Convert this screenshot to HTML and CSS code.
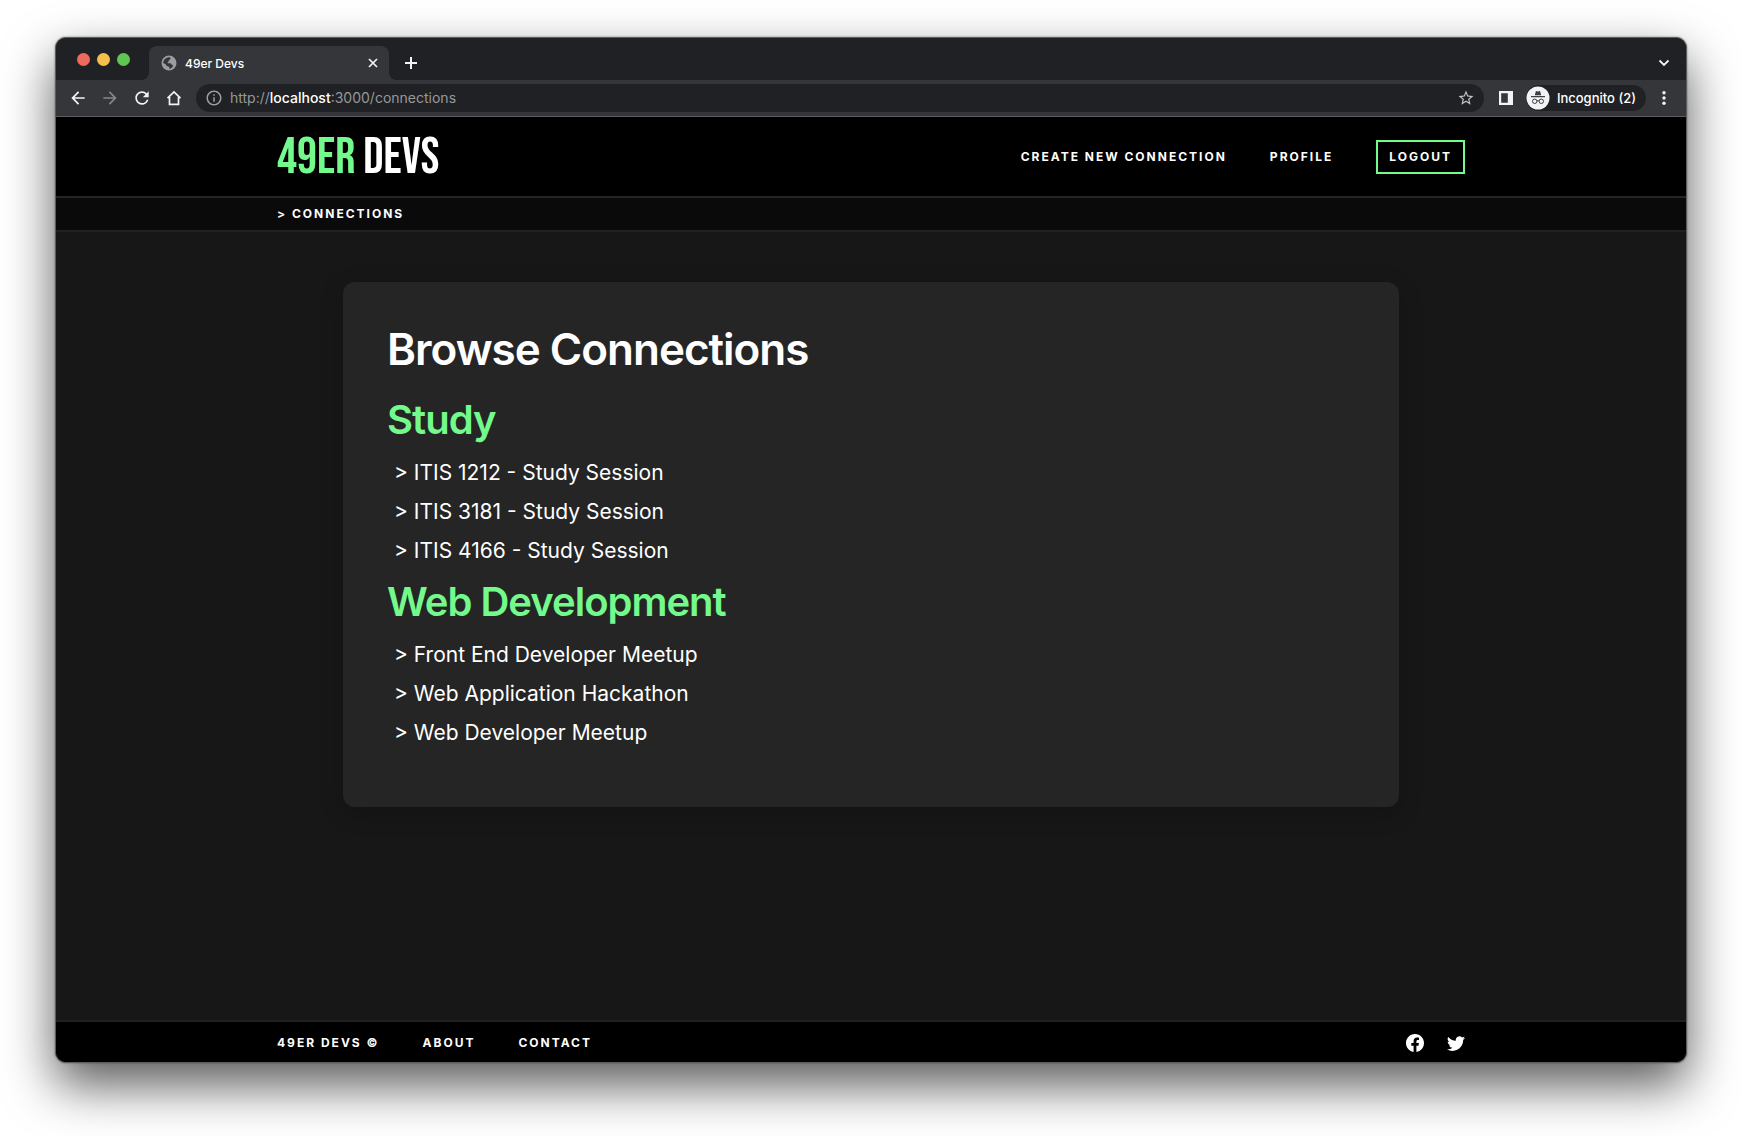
FILE: index.html
```html
<!DOCTYPE html>
<html lang="en">
<head>
<meta charset="utf-8">
<meta name="viewport" content="width=device-width, initial-scale=1">
<title>49er Devs</title>
<link rel="stylesheet" href="styles.css">
</head>
<body>
<div class="window">
  <div class="tabstrip">
    <div class="lights">
      <button class="light light-close" aria-label="Close window"></button>
      <button class="light light-min" aria-label="Minimize window"></button>
      <button class="light light-max" aria-label="Zoom window"></button>
    </div>
    <div class="tab">
      <svg class="globe" width="18" height="18" viewBox="0 0 24 24"><circle cx="12" cy="12" r="10" fill="#9a9da1"/><path fill="#35363a" d="M10.500 4.500c2.500-.800 4 .200 3.600 1.800-.300 1.400-1.900 1.300-2.400 2.200-.400.800.200 1.600-.700 2.100-.800.500-1.300 1.200-.500 1.700h3.300c1.300.200 1 1.600 2.200 1.900 1 .200 1.600.800 1.300 1.800-.600 1.800-2.500 3.500-4.600 3.900-.300-1.200.300-2-.700-2.800-1.600-1-3.200-.400-3.700-2.200-.500-1.600-1.700-2.200-4-2.700C4.200 8.500 7 5.200 10.500 4.500z"/></svg>
      <span class="tab-title">49er Devs</span>
      <button class="icon-btn" aria-label="Close tab"><svg width="16" height="16" viewBox="0 0 16 16" fill="none" stroke="currentColor" stroke-width="1.7"><path d="M4 4l8 8M12 4l-8 8"/></svg></button>
    </div>
    <button class="icon-btn new-tab" aria-label="New tab"><svg width="16" height="16" viewBox="0 0 16 16" fill="none" stroke="currentColor" stroke-width="2"><path d="M8 2v12M2 8h12"/></svg></button>
    <button class="icon-btn tab-search" aria-label="Search tabs"><svg width="16" height="16" viewBox="0 0 16 16" fill="none" stroke="currentColor" stroke-width="1.8"><path d="M3.500 5.500L8 10l4.500-4.500"/></svg></button>
  </div>

  <div class="toolbar">
    <div class="history">
      <button class="icon-btn" aria-label="Back"><svg width="20" height="20" viewBox="0 0 24 24" fill="currentColor"><path d="M20 11H7.830l5.590-5.590L12 4l-8 8 8 8 1.410-1.410L7.830 13H20v-2z"/></svg></button>
      <button class="icon-btn dim" aria-label="Forward"><svg width="20" height="20" viewBox="0 0 24 24" fill="currentColor"><path d="M4 13h12.170l-5.590 5.590L12 20l8-8-8-8-1.410 1.410L16.170 11H4z"/></svg></button>
      <button class="icon-btn" aria-label="Reload"><svg width="20" height="20" viewBox="0 0 24 24" fill="currentColor"><path d="M17.650 6.350A7.958 7.958 0 0 0 12 4c-4.420 0-7.990 3.580-7.990 8s3.570 8 7.990 8c3.730 0 6.840-2.550 7.730-6h-2.080A5.990 5.990 0 0 1 12 18c-3.310 0-6-2.690-6-6s2.690-6 6-6c1.660 0 3.140.690 4.220 1.780L13 11h7V4l-2.350 2.350z"/></svg></button>
      <button class="icon-btn" aria-label="Home"><svg width="20" height="20" viewBox="0 0 20 20" fill="none" stroke="currentColor" stroke-width="1.700"><path d="M3.500 10.200L10 4l6.500 6.200M5.500 9v7.300h9V9"/></svg></button>
    </div>
    <div class="omnibox">
      <svg width="18" height="18" viewBox="0 0 24 24" fill="#9a9da1"><path d="M11 7h2v2h-2zm0 4h2v6h-2zm1-9C6.480 2 2 6.480 2 12s4.480 10 10 10 10-4.480 10-10S17.520 2 12 2zm0 18c-4.410 0-8-3.590-8-8s3.590-8 8-8 8 3.590 8 8-3.590 8-8 8z"/></svg>
      <div class="address">
        <input class="address-input" type="text" aria-label="Address">
        <span class="address-text">http://<b>localhost</b>:3000/connections</span>
      </div>
      <button class="icon-btn star" aria-label="Bookmark this tab"><svg width="18" height="18" viewBox="0 0 24 24" fill="currentColor"><path d="M22 9.240l-7.190-.620L12 2 9.190 8.630 2 9.240l5.460 4.730L5.820 21 12 17.270 18.180 21l-1.630-7.030L22 9.240zM12 15.400l-3.760 2.270 1-4.280-3.320-2.880 4.380-.380L12 6.100l1.710 4.040 4.380.380-3.320 2.880 1 4.280L12 15.400z"/></svg></button>
    </div>
    <button class="icon-btn panel" aria-label="Side panel"><svg width="16" height="16" viewBox="0 0 16 16"><path fill="#f1f3f4" fill-rule="evenodd" d="M1 1h14v14H1zM3.200 3.200v9.600h6.600V3.200z"/></svg></button>
    <button class="incognito">
      <svg width="24" height="24" viewBox="0 0 24 24"><circle cx="12" cy="12" r="11.500" fill="#f1f3f4"/><g fill="#3c4043"><path d="M8.800 9.200l.900-3.500c.100-.500.500-.700 1-.500l1.300.400 1.300-.4c.5-.2.9 0 1 .5l.9 3.500z"/><path d="M5 10h14v1.200H5z"/></g><g fill="none" stroke="#3c4043"><circle cx="8.700" cy="15.300" r="2.200"/><circle cx="15.300" cy="15.300" r="2.200"/><path d="M10.900 15q1.100-.7 2.200 0"/></g></svg>
      <span>Incognito (2)</span>
    </button>
    <button class="icon-btn menu" aria-label="Menu"><svg width="16" height="16" viewBox="0 0 16 16" fill="currentColor"><circle cx="8" cy="2.800" r="1.700"/><circle cx="8" cy="8" r="1.700"/><circle cx="8" cy="13.200" r="1.700"/></svg></button>
  </div>

  <header class="site-header">
    <div class="container header-row">
      <a class="logo" href="#"><span class="accent">49ER</span> DEVS</a>
      <nav class="links">
        <a href="#">CREATE NEW CONNECTION</a>
        <a href="#">PROFILE</a>
        <a class="logout" href="#">LOGOUT</a>
      </nav>
    </div>
  </header>

  <nav class="breadcrumb" aria-label="Breadcrumb">
    <div class="container links"><a href="#">&gt; CONNECTIONS</a></div>
  </nav>

  <main class="content">
    <section class="card">
      <h1>Browse Connections</h1>
      <h2>Study</h2>
      <ul>
        <li><a href="#">&gt; ITIS 1212 - Study Session</a></li>
        <li><a href="#">&gt; ITIS 3181 - Study Session</a></li>
        <li><a href="#">&gt; ITIS 4166 - Study Session</a></li>
      </ul>
      <h2>Web Development</h2>
      <ul>
        <li><a href="#">&gt; Front End Developer Meetup</a></li>
        <li><a href="#">&gt; Web Application Hackathon</a></li>
        <li><a href="#">&gt; Web Developer Meetup</a></li>
      </ul>
    </section>
  </main>

  <footer class="site-footer">
    <div class="container footer-row">
      <nav class="links">
        <a href="#">49ER DEVS ©</a>
        <a href="#">ABOUT</a>
        <a href="#">CONTACT</a>
      </nav>
      <div class="social">
        <a href="#" aria-label="Facebook"><svg width="18" height="18" viewBox="0 0 16 16" fill="currentColor"><path d="M16 8.049c0-4.446-3.582-8.050-8-8.050C3.580 0-.002 3.603-.002 8.050c0 4.017 2.926 7.347 6.750 7.951v-5.625h-2.030V8.050H6.750V6.275c0-2.017 1.195-3.131 3.022-3.131.876 0 1.791.157 1.791.157v1.980h-1.009c-.993 0-1.303.621-1.303 1.258v1.510h2.218l-.354 2.326H9.250V16c3.824-.604 6.750-3.934 6.750-7.951z"/></svg></a>
        <a href="#" aria-label="Twitter"><svg width="18" height="18" viewBox="0 0 16 16" fill="currentColor"><path d="M5.026 15c6.038 0 9.341-5.003 9.341-9.334 0-.140 0-.282-.006-.422A6.685 6.685 0 0 0 16 3.542a6.658 6.658 0 0 1-1.889.518 3.301 3.301 0 0 0 1.447-1.817 6.533 6.533 0 0 1-2.087.793A3.286 3.286 0 0 0 7.875 6.030a9.325 9.325 0 0 1-6.767-3.429 3.289 3.289 0 0 0 1.018 4.382A3.323 3.323 0 0 1 .640 6.575v.045a3.288 3.288 0 0 0 2.632 3.218 3.203 3.203 0 0 1-.865.115 3.230 3.230 0 0 1-.614-.057 3.283 3.283 0 0 0 3.067 2.277A6.588 6.588 0 0 1 .780 13.580a6.320 6.320 0 0 1-.780-.045A9.344 9.344 0 0 0 5.026 15z"/></svg></a>
      </div>
    </div>
  </footer>
</div>
</body>
</html>
```
FILE: styles.css
```css
* {
  box-sizing: border-box;
}

body {
  margin: 0;
  min-height: 100vh;
  padding: 37px 55px 74px;
  display: flex;
  background: #fff;
  color: #fff;
  font-family: Inter, "Liberation Sans", sans-serif;
}

a {
  color: inherit;
  text-decoration: none;
}

button {
  border: 0;
  padding: 0;
  background: none;
  color: inherit;
  font: inherit;
}

svg {
  display: block;
}

.window {
  flex: 1;
  min-width: 0;
  display: flex;
  flex-direction: column;
  overflow: hidden;
  border: 1px solid #5c5d5f;
  border-radius: 11px;
  background: #171717;
  box-shadow: 0 22px 50px rgba(0, 0, 0, 0.65), 0 0 2px rgba(0, 0, 0, 0.5);
}

/* Browser chrome */

.tabstrip {
  display: flex;
  align-items: center;
  height: 42px;
  padding: 8px 14px 0 21px;
  background: #202124;
}

.lights {
  display: flex;
  gap: 7px;
  width: 72px;
  padding-bottom: 7px;
}

.light {
  width: 13px;
  height: 13px;
  border-radius: 50%;
}

.light-close { background: #ed6a5e; }
.light-min { background: #f4bf4f; }
.light-max { background: #61c554; }

.tab {
  position: relative;
  display: flex;
  align-items: center;
  gap: 7px;
  width: 240px;
  height: 34px;
  padding: 0 8px 0 11px;
  border-radius: 8px 8px 0 0;
  background: #35363a;
  font-size: 12px;
  font-weight: 500;
}

.tab::before,
.tab::after {
  content: "";
  position: absolute;
  bottom: 0;
  width: 8px;
  height: 8px;
}

.tab::before {
  right: 100%;
  background: radial-gradient(circle at 0 0, transparent 8px, #35363a 8px);
}

.tab::after {
  left: 100%;
  background: radial-gradient(circle at 100% 0, transparent 8px, #35363a 8px);
}

.tab-title {
  flex: 1;
}

.icon-btn {
  display: flex;
  color: #f1f3f4;
}

.new-tab {
  margin-left: 14px;
}

.tab-search {
  margin-left: auto;
}

.toolbar {
  display: flex;
  align-items: center;
  height: 37px;
  padding: 0 14px 0 12px;
  border-bottom: 1px solid #5b5b60;
  background: #35363a;
}

.history {
  display: flex;
  gap: 12px;
  margin-right: 12px;
}

.dim {
  color: #85868a;
}

.omnibox {
  flex: 1;
  display: flex;
  align-items: center;
  gap: 7px;
  height: 28px;
  padding: 0 9px;
  border-radius: 14px;
  background: #202124;
}

.address {
  position: relative;
  flex: 1;
}

.address-input {
  display: block;
  width: 100%;
  height: 20px;
  border: 0;
  padding: 0;
  outline: 0;
  background: none;
  color: #fff;
  font: inherit;
}

.address-text {
  position: absolute;
  top: 0;
  left: 0;
  color: #96989b;
  font-size: 14px;
  line-height: 20px;
  pointer-events: none;
}

.address-text b {
  color: #fff;
  font-weight: 500;
}

.star {
  color: #c0c2c5;
}

.panel {
  margin: 0 12px 0 14px;
}

.incognito {
  display: flex;
  align-items: center;
  gap: 7px;
  height: 26px;
  margin-right: 10px;
  padding: 0 10px 0 0;
  border-radius: 13px;
  background: #202124;
  font-size: 13px;
  font-weight: 500;
}

/* Site */

.container {
  width: 100%;
  max-width: 1188px;
  margin: 0 auto;
}

.site-header {
  border-bottom: 2px solid #232626;
  background: #000;
}

.header-row {
  display: flex;
  align-items: center;
  justify-content: space-between;
  height: 79px;
}

.logo {
  padding-top: 3px;
  font-family: "Bebas Neue", "Roboto Condensed", "Liberation Sans Narrow", sans-serif;
  font-size: 50px;
  font-weight: 400;
  line-height: 56px;
}

.accent,
h2 {
  color: #74f98c;
}

.links {
  display: flex;
  align-items: center;
  gap: 43px;
  font-size: 12px;
  font-weight: 700;
  line-height: 16px;
  letter-spacing: 2px;
}

.logout {
  border: 2px solid #74f98c;
  padding: 7px 11px;
}

.breadcrumb {
  padding: 8px 0;
  border-bottom: 2px solid #1e2322;
  background: #0a0a0a;
}

.content {
  flex: 1;
  padding: 50px 24px;
}

.card {
  max-width: 1056px;
  margin: 0 auto;
  padding: 40px 44px 55px;
  border-radius: 12px;
  background: #252525;
  box-shadow: 0 6px 24px rgba(0, 0, 0, 0.2);
}

h1,
h2 {
  margin: 0;
  font-weight: 600;
  letter-spacing: -1px;
}

h1 {
  margin-bottom: 16px;
  font-size: 44px;
  line-height: 54px;
}

h2 {
  margin-top: 4px;
  font-size: 40px;
  line-height: 56px;
}

ul {
  margin: 5px 0 0;
  padding: 0 7px;
  list-style: none;
  font-size: 21px;
  line-height: 39px;
}

.site-footer {
  border-top: 2px solid #1e2121;
  background: #000;
}

.footer-row {
  display: flex;
  align-items: center;
  justify-content: space-between;
  height: 40px;
  padding-top: 2px;
}

.social {
  display: flex;
  gap: 23px;
}
```
